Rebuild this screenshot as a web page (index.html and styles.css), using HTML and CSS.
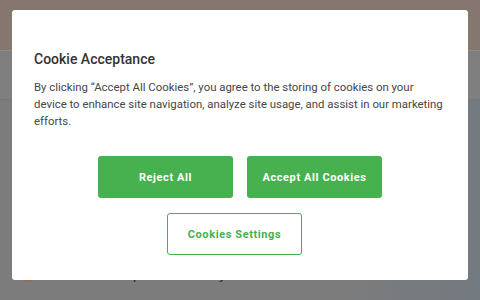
FILE: index.html
```html
<!DOCTYPE html>
<html lang="en">
<head>
  <meta charset="UTF-8">
  <meta name="viewport" content="width=device-width, initial-scale=1.0">
  <title>Cookie Acceptance</title>
  <link rel="stylesheet" href="styles.css">
</head>
<body>
  <div class="page">
    <div class="page-header"></div>
    <div class="page-nav"></div>
    <div class="page-content">
      <div class="promo">
        <span class="promo-dot"></span>
        <span class="promo-text">purchase a key</span>
      </div>
    </div>
  </div>

  <div class="overlay">
    <div class="modal">
      <h2>Cookie Acceptance</h2>
      <p>By clicking “Accept All Cookies”, you agree to the storing of cookies on your device to enhance site navigation, analyze site usage, and assist in our marketing efforts.</p>
      <div class="actions">
        <button class="btn primary">Reject All</button>
        <button class="btn primary">Accept All Cookies</button>
      </div>
      <div class="actions settings-row">
        <button class="btn outline">Cookies Settings</button>
      </div>
    </div>
  </div>
</body>
</html>
```

FILE: styles.css
```css
body {
  margin: 0;
  font-family: Roboto, "Liberation Sans", Arial, sans-serif;
  background: #7e7e7e;
  height: 300px;
  overflow: hidden;
}
.page {
  height: 300px;
  display: flex;
  flex-direction: column;
}
.page-header {
  height: 50px;
  background: #85776f;
}
.page-nav {
  height: 48px;
  background: #7f7f7f;
  border-top: 1px solid #8c8c8c;
  border-bottom: 1px solid #777;
}
.page-content {
  flex: 1;
  background: linear-gradient(90deg, #7c7c7c 0%, #7c7c7c 70%, #737a80 100%);
  display: flex;
  align-items: flex-end;
  padding: 0 0 19px 22px;
}
.promo {
  display: flex;
  align-items: flex-end;
  gap: 99px;
  line-height: 1;
}
.promo-dot {
  width: 12px;
  height: 12px;
  border-radius: 50%;
  background: #a0674a;
  margin-bottom: -1px;
}
.promo-text {
  font-size: 14px;
  color: #2a2a2a;
}
.overlay {
  position: fixed;
  inset: 0;
}
.modal {
  position: absolute;
  left: 12px;
  top: 10px;
  width: 456px;
  height: 270px;
  box-sizing: border-box;
  background: #fff;
  border-radius: 3px;
  padding: 39px 22px 0;
}
.modal h2 {
  margin: 0;
  font-size: 14px;
  font-weight: 500;
  line-height: 20px;
  color: #333;
}
.modal p {
  margin: 10px 0 0;
  font-size: 11.4px;
  line-height: 17px;
  color: #464646;
}
.actions {
  display: flex;
  justify-content: center;
  gap: 14px;
  margin-top: 26px;
}
.settings-row {
  margin-top: 15px;
  padding-right: 11px;
}
.btn {
  width: 135px;
  height: 42px;
  border-radius: 3px;
  font-family: inherit;
  font-size: 11px;
  font-weight: 700;
  letter-spacing: 0.6px;
  cursor: pointer;
}
.primary {
  background: #47b04f;
  border: none;
  color: #fff;
}
.outline {
  background: #fff;
  border: 1px solid #47b04f;
  color: #47b04f;
}
```
